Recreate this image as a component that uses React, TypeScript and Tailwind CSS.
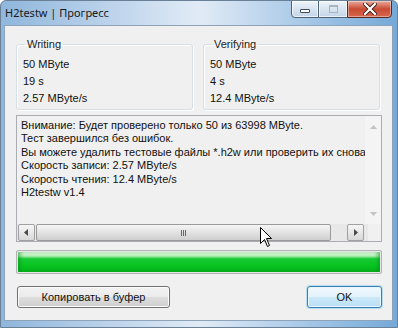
import React from "react";

const ui = { fontFamily: '"Liberation Sans", Arial, sans-serif' };

const GroupBox = ({ title, lines }: { title: string; lines: string[] }) => (
  <fieldset className="w-[177px] h-[72px] border border-[#d5dfe5] rounded-[3px] shadow-[inset_1px_1px_0_#ffffff,1px_1px_0_#ffffff] pl-[6px] pr-[6px] m-0">
    <legend className="ml-[2px] px-[2px] text-[11px] leading-[12px] text-[#222]">{title}</legend>
    <div className="flex flex-col pt-[6px] text-[11px] leading-[17px] text-[#111]">
      {lines.map((l) => (
        <span key={l}>{l}</span>
      ))}
    </div>
  </fieldset>
);

const ArrowBtn = ({ dir, disabled }: { dir: "l" | "r" | "u" | "d"; disabled?: boolean }) => {
  const pts = {
    l: "6,1 2,4.5 6,8",
    r: "3,1 7,4.5 3,8",
    u: "1,6 4.5,2 8,6",
    d: "1,3 4.5,7 8,3",
  }[dir];
  return (
    <div
      className={
        disabled
          ? "w-[17px] h-[17px] flex items-center justify-center"
          : "w-[17px] h-[17px] flex items-center justify-center border border-[#a0a0a0] rounded-[2px] bg-gradient-to-b from-[#f6f6f6] to-[#d8d8d8]"
      }
    >
      <svg width="9" height="9" viewBox="0 0 9 9">
        <polygon points={pts} fill={disabled ? "#c4c4c4" : "#4a4a4a"} />
      </svg>
    </div>
  );
};

const lines = [
  "Внимание: Будет проверено только 50 из 63998 MByte.",
  "Тест завершился без ошибок.",
  "Вы можете удалить тестовые файлы *.h2w или проверить их снова позже.",
  "Скорость записи: 2.57 MByte/s",
  "Скорость чтения: 12.4 MByte/s",
  "H2testw v1.4",
];

export default function App() {
  return (
    <div
      className="relative w-[398px] h-[328px] flex flex-col overflow-hidden bg-gradient-to-r from-[#8fb6dc] via-[#e1ebf6] to-[#74a9d8] border border-[#6a8097] rounded-t-[6px]"
      style={ui}
    >
      {/* title bar */}
      <div className="h-[24px] flex items-start justify-between">
        <span
          className="pl-[4px] pt-[4px] text-[11px] leading-[15px] text-[#1a1a1a]"
          style={{ fontFamily: '"Noto Sans", "Open Sans", sans-serif' }}
        >
          H2testw | Прогресс
        </span>
        <div className="flex mr-[5px] -mt-px">
          <div className="w-[28px] h-[18px] flex items-end justify-center pb-[4px] border border-[#4f6378] rounded-bl-[4px] bg-gradient-to-b from-[#eef3f9] to-[#c3d5e8] shadow-[inset_0_0_0_1px_#ffffffaa]">
            <div className="w-[10px] h-[4px] bg-white border border-[#3c4b5c] rounded-[1px]" />
          </div>
          <div className="w-[28px] h-[18px] flex items-center justify-center border-y border-[#4f6378] bg-gradient-to-b from-[#eef3f9] to-[#c3d5e8] shadow-[inset_0_0_0_1px_#ffffffaa]">
            <div className="w-[9px] h-[8px] border border-[#a8b4c0] border-t-2" />
          </div>
          <div className="w-[45px] h-[18px] flex items-center justify-center border border-[#5a2a22] rounded-br-[4px] bg-gradient-to-b from-[#e9a99b] via-[#c84a32] to-[#d8674e] shadow-[inset_0_0_0_1px_#ffffff66]">
            <svg width="14" height="12" viewBox="0 0 14 12">
              <path d="M2 1 L12 11 M12 1 L2 11" stroke="#3b1d18" strokeWidth="4" strokeLinecap="square" />
              <path d="M2 1 L12 11 M12 1 L2 11" stroke="#ffffff" strokeWidth="2.2" strokeLinecap="square" />
            </svg>
          </div>
        </div>
      </div>

      {/* client area */}
      <div className="ml-[3px] mr-[4px] h-[296px] bg-[#f0f0f0] border border-[#8da3ba] px-[11px] pt-[12px]">
        <div className="flex gap-[10px]">
          <GroupBox title="Writing" lines={["50 MByte", "19 s", "2.57 MByte/s"]} />
          <GroupBox title="Verifying" lines={["50 MByte", "4 s", "12.4 MByte/s"]} />
        </div>

        {/* log edit */}
        <div className="mt-[5px] w-[366px] h-[127px] border border-[#abadb3] flex flex-col">
          <div className="flex flex-1 min-h-0">
            <div className="flex-1 min-w-0 overflow-hidden pl-[4px] pt-[3px] text-[11px] leading-[13.4px] text-[#111] whitespace-nowrap">
              {lines.map((l) => (
                <div key={l}>{l}</div>
              ))}
            </div>
            <div className="w-[16px] flex flex-col justify-between items-center bg-[#f4f4f4] pt-[3px] pb-[2px]">
              <ArrowBtn dir="u" disabled />
              <ArrowBtn dir="d" disabled />
            </div>
          </div>
          <div className="h-[17px] flex">
            <div className="flex-1 flex items-center bg-[#e8e8e8] pl-[1px] pr-[4px]">
              <ArrowBtn dir="l" />
              <div className="flex-1 flex h-[17px] pl-[1px] pr-[16px]">
                <div className="w-[295px] h-[17px] border border-[#9a9a9a] rounded-[2px] bg-gradient-to-b from-[#f5f5f5] via-[#e2e2e2] to-[#cfcfcf] flex items-center justify-center">
                  <div className="flex gap-[1px]">
                    <div className="w-[1px] h-[6px] bg-[#666]" />
                    <div className="w-[1px] h-[6px] bg-[#666]" />
                    <div className="w-[1px] h-[6px] bg-[#666]" />
                  </div>
                </div>
              </div>
              <ArrowBtn dir="r" />
            </div>
            <div className="w-[16px] bg-[#f0f0f0]" />
          </div>
        </div>

        {/* progress bar */}
        <div className="mt-[8px] w-[366px] h-[24px] border border-[#b2b2b2] rounded-[2px] p-px bg-[#e6e6e6]">
          <div className="w-full h-full rounded-[1px] bg-[linear-gradient(to_bottom,#e8f9e8_0%,#b0eeb2_20%,#19c936_34%,#06c41f_70%,#07b01d_100%)] shadow-[inset_4px_0_4px_-2px_#02901599,inset_-4px_0_4px_-2px_#02901599]" />
        </div>

        {/* buttons */}
        <div className="mt-[12px] flex justify-between w-[366px]">
          <button className="ml-px w-[153px] h-[22px] border border-[#707070] rounded-[3px] bg-[linear-gradient(to_bottom,#f2f2f2_0%,#ebebeb_48%,#dddddd_52%,#cfcfcf_100%)] shadow-[inset_0_0_0_1px_#fcfcfc] text-[11px] text-[#111]">
            Копировать в буфер
          </button>
          <button className="w-[75px] h-[22px] border border-[#3c7fb1] rounded-[3px] bg-[linear-gradient(to_bottom,#f0f8fd_0%,#e2f2fb_48%,#cbe8f8_52%,#b9dff5_100%)] shadow-[inset_0_0_0_1px_#e8f6fd,0_0_0_1px_#8fd0f099] text-[11px] text-[#111]">
            OK
          </button>
        </div>
      </div>

      {/* mouse cursor */}
      <svg className="absolute left-[259px] top-[226px]" width="13" height="21" viewBox="0 0 13 21">
        <path d="M0.5 0.5 L0.5 16.5 L4.5 12.5 L7.5 19.5 L9.5 18.5 L6.5 11.5 L11.5 11.5 Z" fill="#fff" stroke="#000" strokeWidth="1" />
      </svg>
    </div>
  );
}
